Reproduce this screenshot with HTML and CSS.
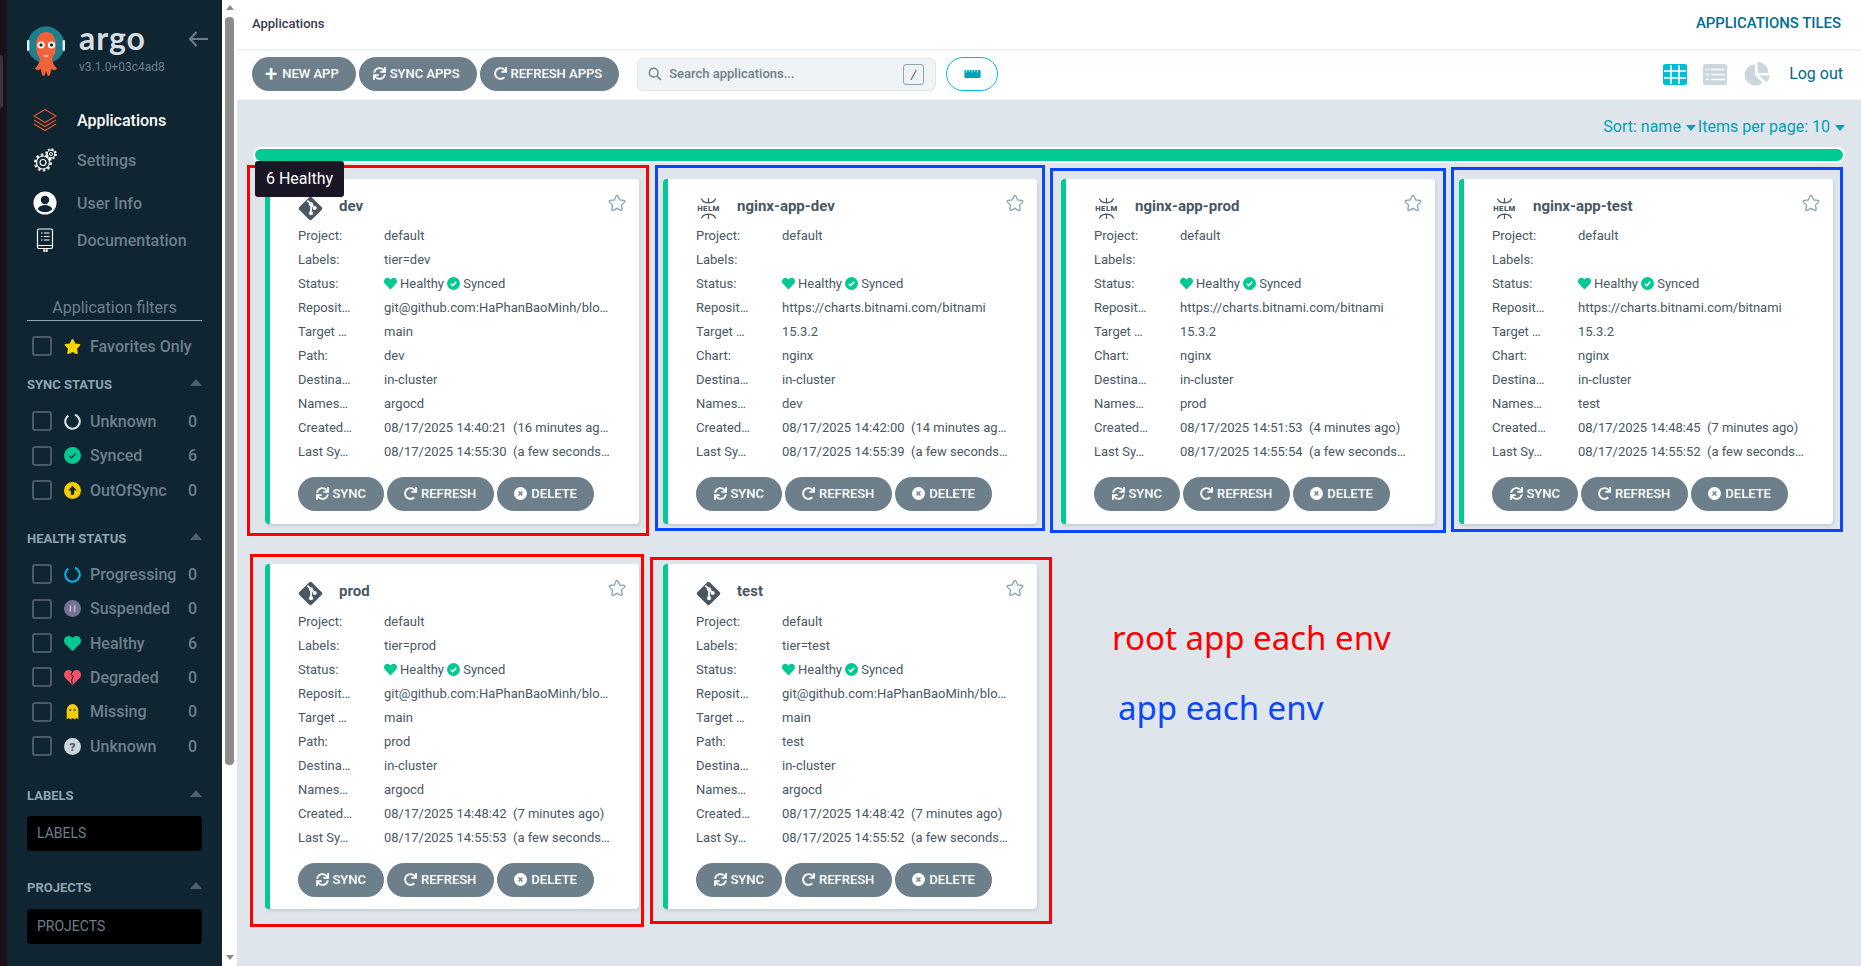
FILE: index.html
```html
<!DOCTYPE html>
<html lang="en">
<head>
    <meta charset="UTF-8">
    <title>Applications Tiles - Argo CD</title>
    <link rel="stylesheet" href="styles.css">
</head>
<body>
    <svg class="sprite" xmlns="http://www.w3.org/2000/svg">
        <symbol id="i-sync" viewBox="0 0 512 512"><path fill="currentColor" d="M440.65 12.57l4 82.77A247.16 247.16 0 0 0 255.83 8C134.73 8 33.91 94.92 12.29 209.82A12 12 0 0 0 24.09 224h49.05a12 12 0 0 0 11.67-9.26 175.91 175.91 0 0 1 317-56.94l-101.46-4.86a12 12 0 0 0-12.57 12v47.41a12 12 0 0 0 12 12H500a12 12 0 0 0 12-12V12a12 12 0 0 0-12-12h-47.37a12 12 0 0 0-11.98 12.57zM255.83 432a175.61 175.61 0 0 1-146-77.8l101.8 4.87a12 12 0 0 0 12.57-12v-47.4a12 12 0 0 0-12-12H12a12 12 0 0 0-12 12V500a12 12 0 0 0 12 12h47.35a12 12 0 0 0 12-12.6l-4.15-82.57A247.17 247.17 0 0 0 255.83 504c121.11 0 221.93-86.92 243.55-201.82a12 12 0 0 0-11.8-14.18h-49.05a12 12 0 0 0-11.67 9.26A175.86 175.86 0 0 1 255.83 432z"/></symbol>
        <symbol id="i-redo" viewBox="0 0 512 512"><path fill="currentColor" d="M500.33 0h-47.41a12 12 0 0 0-12 12.57l4 82.76A247.42 247.42 0 0 0 256 8C119.34 8 8.05 119.53 8 256.19 8 393 119.1 504 256 504a247.1 247.1 0 0 0 166.18-63.91 12 12 0 0 0 .48-17.43l-34-34a12 12 0 0 0-16.38-.55A176 176 0 1 1 402.1 157.8l-101.53-4.87a12 12 0 0 0-12.57 12v47.41a12 12 0 0 0 12 12h200.33a12 12 0 0 0 12-12V12a12 12 0 0 0-12-12z"/></symbol>
        <symbol id="i-delete" viewBox="0 0 16 16"><circle cx="8" cy="8" r="8" fill="currentColor"/><path d="M5.6 5.6l4.8 4.8M10.4 5.6l-4.8 4.8" stroke="#6d7f8b" stroke-width="1.6"/></symbol>
        <symbol id="i-heart" viewBox="0 0 512 512"><path fill="#00c994" d="M462.3 62.6C407.5 15.9 326 24.3 275.7 76.2L256 96.5l-19.7-20.3C186.1 24.3 104.5 15.9 49.7 62.6c-62.8 53.6-66.1 149.8-9.9 207.9l193.5 199.8c12.5 12.9 32.8 12.9 45.3 0l193.5-199.8c56.3-58.1 53-154.3-9.8-207.9z"/></symbol>
        <symbol id="i-check" viewBox="0 0 16 16"><circle cx="8" cy="8" r="8" fill="#00c994"/><path d="M4.6 8.2l2.4 2.4 4.4-4.6" fill="none" stroke="#fff" stroke-width="1.8"/></symbol>
        <symbol id="i-star" viewBox="-20 -20 616 552"><path fill="none" stroke="#8fa4b1" stroke-width="46" d="M259.3 17.8L194 150.2 47.9 171.5c-26.2 3.8-36.7 36.1-17.7 54.6l105.7 103-25 145.5c-4.5 26.3 23.2 46 46.4 33.7L288 439.6l130.7 68.7c23.2 12.2 50.9-7.4 46.4-33.7l-25-145.5 105.7-103c19-18.5 8.5-50.8-17.7-54.6L382 150.2 316.7 17.8c-11.7-23.6-45.6-23.9-57.4 0z"/></symbol>
        <symbol id="i-git" viewBox="0 0 24 24"><rect x="3.5" y="3.5" width="17" height="17" rx="2" transform="rotate(45 12 12)" fill="#495763"/><path d="M9 4.5l7 7M12.5 8v8.5" stroke="#fff" stroke-width="1.7" fill="none"/><circle cx="12.5" cy="8" r="2" fill="#fff"/><circle cx="16" cy="11.5" r="2" fill="#fff"/><circle cx="12.5" cy="16.5" r="2" fill="#fff"/></symbol>
        <symbol id="i-helm" viewBox="0 0 24 24">
            <g fill="none" stroke="#495763" stroke-width="1.2"><path d="M6 4.5Q12 8.5 18 4.5M12 6.5V2M7.8 5.8L5 2.5M16.2 5.8L19 2.5"/><path d="M6 19.5Q12 15.5 18 19.5M12 17.5V22M7.8 18.2L5 21.5M16.2 18.2L19 21.5"/></g>
            <text x="12" y="14.7" text-anchor="middle" font-family="Roboto" font-weight="900" font-size="7.4" letter-spacing=".5" fill="#495763">HELM</text>
        </symbol>
    </svg>

    <div class="strip"><div class="strip-tab"></div></div>

    <aside class="sidebar">
        <div class="brand">
            <svg class="brand-logo" viewBox="0 0 38 52">
                <circle cx="19" cy="20" r="18.5" fill="#1c7f8d"/>
                <rect x="0" y="15" width="2.4" height="11" rx="1" fill="#e8eef0"/>
                <rect x="35.6" y="15" width="2.4" height="11" rx="1" fill="#e8eef0"/>
                <path d="M9 21C9 12 13 7 19 7s10 5 10 14c0 6-2 10-4 13 1 5 3 8 5 9-1 3-4 2-6 1 0 3-1 6-2 7-2 0-2-2-3-5-1 3-1 5-3 5-1-1-2-4-2-7-2 1-5 2-6-1 2-1 4-4 5-9-2-3-4-7-4-13z" fill="#f0623a"/>
                <circle cx="14" cy="20" r="3.6" fill="#fff"/><circle cx="24.5" cy="20" r="3.6" fill="#fff"/>
                <circle cx="14" cy="20" r="1.7" fill="#2b2b2b"/><circle cx="24.5" cy="20" r="1.7" fill="#2b2b2b"/>
                <path d="M16 30.5q3 2.5 6 0z" fill="#fff"/>
            </svg>
            <div class="brand-text">
                <div class="brand-name">argo</div>
                <div class="brand-version">v3.1.0+03c4ad8</div>
            </div>
            <svg class="brand-back" viewBox="0 0 20 16"><path d="M8.5 1L2 8l6.5 7M2.5 8H20" fill="none" stroke="#6d7f8b" stroke-width="2"/></svg>
        </div>

        <nav class="nav">
            <a class="nav-item nav-item-active">
                <svg class="nav-icon" viewBox="0 0 24 24" fill="none" stroke="#e9562e" stroke-width="1.1"><path d="M12 1.5L23 8l-11 6.5L1 8z"/><path d="M1 12l11 6.5L23 12"/><path d="M1 16l11 6.5L23 16"/></svg>
                Applications
            </a>
            <a class="nav-item">
                <svg class="nav-icon" viewBox="0 0 24 24" fill="none" stroke="#fff"><circle cx="10" cy="14.5" r="6.5" stroke-width="1.2"/><circle cx="10" cy="14.5" r="8" stroke-width="2" stroke-dasharray="2.6 2.43"/><circle cx="10" cy="14.5" r="3" stroke-width="1.2"/><circle cx="18" cy="6" r="3.8" stroke-width="1.2"/><circle cx="18" cy="6" r="5" stroke-width="1.6" stroke-dasharray="2 1.93"/><circle cx="18" cy="6" r="1.5" stroke-width="1"/></svg>
                Settings
            </a>
            <a class="nav-item">
                <svg class="nav-icon" viewBox="0 0 24 24"><circle cx="12" cy="12" r="11.5" fill="#fff"/><circle cx="12" cy="9" r="4.2" fill="#0f2531"/><path d="M4.6 18c1.6-3 4.4-4 7.4-4s5.8 1 7.4 4c-2 2.2-4.6 3.3-7.4 3.3S6.6 20.2 4.6 18z" fill="#0f2531"/></svg>
                User Info
            </a>
            <a class="nav-item">
                <svg class="nav-icon" viewBox="0 0 24 24" fill="none" stroke="#fff" stroke-width="1.2"><rect x="4.5" y="1" width="15" height="19.5" rx="1.5"/><path d="M4.5 17.5h15M11 20.5v3l1.5-1 1.5 1v-3M8 5h1.5M11 5h5.5M8 8.5h1.5M11 8.5h5.5M8 12h1.5M11 12h5.5"/></svg>
                Documentation
            </a>
        </nav>

        <div class="filters-title">Application filters</div>
        <div class="filter-row filter-row-fav">
            <span class="check"></span>
            <svg class="filter-icon" viewBox="0 0 576 512"><path fill="#ffd500" d="M259.3 17.8L194 150.2 47.9 171.5c-26.2 3.8-36.7 36.1-17.7 54.6l105.7 103-25 145.5c-4.5 26.3 23.2 46 46.4 33.7L288 439.6l130.7 68.7c23.2 12.2 50.9-7.4 46.4-33.7l-25-145.5 105.7-103c19-18.5 8.5-50.8-17.7-54.6L382 150.2 316.7 17.8c-11.7-23.6-45.6-23.9-57.4 0z"/></svg>
            <span class="filter-label">Favorites Only</span>
        </div>

        <div class="section-head section-sync">SYNC STATUS <span class="caret-up"></span></div>
        <div class="filter-row">
            <span class="check"></span>
            <svg class="filter-icon" viewBox="0 0 16 16"><circle cx="8" cy="8" r="6.8" fill="none" stroke="#d5dfe6" stroke-width="2" stroke-dasharray="36 7" transform="rotate(-70 8 8)"/></svg>
            <span class="filter-label">Unknown</span><span class="filter-count">0</span>
        </div>
        <div class="filter-row">
            <span class="check"></span>
            <svg class="filter-icon" viewBox="0 0 16 16"><circle cx="8" cy="8" r="8" fill="#00c994"/><path d="M5 8.2l2 2 4-4" fill="none" stroke="#123" stroke-width="1.2"/></svg>
            <span class="filter-label">Synced</span><span class="filter-count">6</span>
        </div>
        <div class="filter-row">
            <span class="check"></span>
            <svg class="filter-icon" viewBox="0 0 16 16"><circle cx="8" cy="8" r="8" fill="#f5cd00"/><path d="M8 3.5L12 8H9.5v4h-3V8H4z" fill="#0f2531"/></svg>
            <span class="filter-label">OutOfSync</span><span class="filter-count">0</span>
        </div>

        <div class="section-head section-health">HEALTH STATUS <span class="caret-up"></span></div>
        <div class="filter-row">
            <span class="check"></span>
            <svg class="filter-icon" viewBox="0 0 16 16"><circle cx="8" cy="8" r="6.8" fill="none" stroke="#0dadea" stroke-width="2" stroke-dasharray="36 7" transform="rotate(-70 8 8)"/></svg>
            <span class="filter-label">Progressing</span><span class="filter-count">0</span>
        </div>
        <div class="filter-row">
            <span class="check"></span>
            <svg class="filter-icon" viewBox="0 0 16 16"><circle cx="8" cy="8" r="8" fill="#766f94"/><path d="M6 5v6M10 5v6" stroke="#b5b0c8" stroke-width="1.8"/></svg>
            <span class="filter-label">Suspended</span><span class="filter-count">0</span>
        </div>
        <div class="filter-row">
            <span class="check"></span>
            <svg class="filter-icon"><use href="#i-heart"/></svg>
            <span class="filter-label">Healthy</span><span class="filter-count">6</span>
        </div>
        <div class="filter-row">
            <span class="check"></span>
            <svg class="filter-icon" viewBox="0 0 512 512"><path fill="#f0526a" d="M462.3 62.6C407.5 15.9 326 24.3 275.7 76.2L256 96.5l-19.7-20.3C186.1 24.3 104.5 15.9 49.7 62.6c-62.8 53.6-66.1 149.8-9.9 207.9l193.5 199.8c12.5 12.9 32.8 12.9 45.3 0l193.5-199.8c56.3-58.1 53-154.3-9.8-207.9z"/><path d="M270 60l-60 110 70 50-50 120 20 110" fill="none" stroke="#0f2531" stroke-width="30"/></svg>
            <span class="filter-label">Degraded</span><span class="filter-count">0</span>
        </div>
        <div class="filter-row">
            <span class="check"></span>
            <svg class="filter-icon" viewBox="0 0 16 16"><path d="M2.5 15.5V7a5.5 6 0 0 1 11 0v8.5l-1.8-1.3-1.9 1.3L8 14.2l-1.8 1.3-1.9-1.3z" fill="#f5cd00"/><circle cx="6" cy="6.5" r=".9" fill="#0f2531"/><circle cx="10" cy="6.5" r=".9" fill="#0f2531"/></svg>
            <span class="filter-label">Missing</span><span class="filter-count">0</span>
        </div>
        <div class="filter-row">
            <span class="check"></span>
            <svg class="filter-icon" viewBox="0 0 16 16"><circle cx="8" cy="8" r="8" fill="#ccd6dd"/><text x="8" y="11.8" text-anchor="middle" font-family="Roboto" font-weight="900" font-size="11" fill="#495763">?</text></svg>
            <span class="filter-label">Unknown</span><span class="filter-count">0</span>
        </div>

        <div class="section-head section-labels">LABELS <span class="caret-up"></span></div>
        <div class="tag-input">LABELS</div>
        <div class="section-head section-projects">PROJECTS <span class="caret-up"></span></div>
        <div class="tag-input">PROJECTS</div>
    </aside>

    <div class="rail">
        <span class="rail-arrow-up"></span>
        <div class="rail-thumb"></div>
        <span class="rail-arrow-down"></span>
    </div>

    <main class="main">
        <header class="topbar">
            <div class="crumb">Applications</div>
            <div class="page-title">APPLICATIONS TILES</div>
        </header>

        <div class="toolbar">
            <button class="btn btn-tool"><span class="btn-plus">+</span> NEW APP</button>
            <button class="btn btn-tool"><svg class="btn-icon"><use href="#i-sync"/></svg> SYNC APPS</button>
            <button class="btn btn-tool"><svg class="btn-icon"><use href="#i-redo"/></svg> REFRESH APPS</button>
            <div class="search">
                <svg class="search-icon" viewBox="0 0 16 16"><circle cx="6.5" cy="6.5" r="5" fill="none" stroke="#6d7f8b" stroke-width="1.6"/><path d="M10.3 10.3l4.5 4.5" stroke="#6d7f8b" stroke-width="1.8"/></svg>
                <input class="search-input" type="text" placeholder="Search applications...">
                <span class="search-key">/</span>
            </div>
            <button class="btn-outline">
                <svg class="ruler-icon" viewBox="0 0 18 10"><rect y="1" width="18" height="9" rx="1" fill="#00a2b3"/><path d="M2.5 1v3M5.5 1v2M8.5 1v3M11.5 1v2M14.5 1v3" stroke="#fff" stroke-width=".9"/></svg>
            </button>
            <div class="toolbar-right">
                <svg class="view-icon" viewBox="0 0 24 21"><rect width="24" height="21" rx="2.5" fill="#00bcd4"/><path d="M1 7h22M1 14h22M8 1v19M16 1v19" stroke="#fff" stroke-width="1.7"/></svg>
                <svg class="view-icon" viewBox="0 0 24 21"><rect width="24" height="21" rx="2.5" fill="#ccd6dd"/><path d="M8 5.5h14M8 10.5h14M8 15.5h14M2.5 5.5H6M2.5 10.5H6M2.5 15.5H6" stroke="#fff" stroke-width="1.7"/></svg>
                <svg class="view-icon view-icon-pie" viewBox="0 0 26 24"><path d="M11 2.5a10.5 10.5 0 1 0 7.5 18L11 13z" fill="#ccd6dd"/><path d="M13.5 0a11 11 0 0 1 11 11h-11z" fill="#ccd6dd"/><path d="M15 13.5h11a11 11 0 0 1-3.3 6.7z" fill="#ccd6dd"/></svg>
                <a class="logout">Log out</a>
            </div>
        </div>

        <section class="content">
            <div class="sort-row">
                <span>Sort: name <i class="caret-down"></i></span>
                <span>Items per page: 10 <i class="caret-down"></i></span>
            </div>
            <div class="health-bar"></div>

            <div class="tiles">
                <article class="tile">
                    <div class="tile-head">
                        <svg class="tile-logo"><use href="#i-git"/></svg>
                        <span class="tile-name">dev</span>
                        <svg class="tile-star"><use href="#i-star"/></svg>
                    </div>
                    <div class="tile-row"><span class="key">Project:</span><span class="val">default</span></div>
                    <div class="tile-row"><span class="key">Labels:</span><span class="val">tier=dev</span></div>
                    <div class="tile-row"><span class="key">Status:</span><span class="val"><svg class="status-icon"><use href="#i-heart"/></svg>Healthy <svg class="status-icon"><use href="#i-check"/></svg>Synced</span></div>
                    <div class="tile-row"><span class="key">Reposit…</span><span class="val">git@github.com:HaPhanBaoMinh/blo…</span></div>
                    <div class="tile-row"><span class="key">Target …</span><span class="val">main</span></div>
                    <div class="tile-row"><span class="key">Path:</span><span class="val">dev</span></div>
                    <div class="tile-row"><span class="key">Destina…</span><span class="val">in-cluster</span></div>
                    <div class="tile-row"><span class="key">Names…</span><span class="val">argocd</span></div>
                    <div class="tile-row"><span class="key">Created…</span><span class="val">08/17/2025 14:40:21 &nbsp;(16 minutes ag…</span></div>
                    <div class="tile-row"><span class="key">Last Sy…</span><span class="val">08/17/2025 14:55:30 &nbsp;(a few seconds…</span></div>
                    <div class="tile-actions">
                        <button class="btn"><svg class="btn-icon"><use href="#i-sync"/></svg> SYNC</button>
                        <button class="btn"><svg class="btn-icon"><use href="#i-redo"/></svg> REFRESH</button>
                        <button class="btn"><svg class="btn-icon"><use href="#i-delete"/></svg> DELETE</button>
                    </div>
                </article>

                <article class="tile">
                    <div class="tile-head">
                        <svg class="tile-logo"><use href="#i-helm"/></svg>
                        <span class="tile-name">nginx-app-dev</span>
                        <svg class="tile-star"><use href="#i-star"/></svg>
                    </div>
                    <div class="tile-row"><span class="key">Project:</span><span class="val">default</span></div>
                    <div class="tile-row"><span class="key">Labels:</span><span class="val"></span></div>
                    <div class="tile-row"><span class="key">Status:</span><span class="val"><svg class="status-icon"><use href="#i-heart"/></svg>Healthy <svg class="status-icon"><use href="#i-check"/></svg>Synced</span></div>
                    <div class="tile-row"><span class="key">Reposit…</span><span class="val">https://charts.bitnami.com/bitnami</span></div>
                    <div class="tile-row"><span class="key">Target …</span><span class="val">15.3.2</span></div>
                    <div class="tile-row"><span class="key">Chart:</span><span class="val">nginx</span></div>
                    <div class="tile-row"><span class="key">Destina…</span><span class="val">in-cluster</span></div>
                    <div class="tile-row"><span class="key">Names…</span><span class="val">dev</span></div>
                    <div class="tile-row"><span class="key">Created…</span><span class="val">08/17/2025 14:42:00 &nbsp;(14 minutes ag…</span></div>
                    <div class="tile-row"><span class="key">Last Sy…</span><span class="val">08/17/2025 14:55:39 &nbsp;(a few seconds…</span></div>
                    <div class="tile-actions">
                        <button class="btn"><svg class="btn-icon"><use href="#i-sync"/></svg> SYNC</button>
                        <button class="btn"><svg class="btn-icon"><use href="#i-redo"/></svg> REFRESH</button>
                        <button class="btn"><svg class="btn-icon"><use href="#i-delete"/></svg> DELETE</button>
                    </div>
                </article>

                <article class="tile">
                    <div class="tile-head">
                        <svg class="tile-logo"><use href="#i-helm"/></svg>
                        <span class="tile-name">nginx-app-prod</span>
                        <svg class="tile-star"><use href="#i-star"/></svg>
                    </div>
                    <div class="tile-row"><span class="key">Project:</span><span class="val">default</span></div>
                    <div class="tile-row"><span class="key">Labels:</span><span class="val"></span></div>
                    <div class="tile-row"><span class="key">Status:</span><span class="val"><svg class="status-icon"><use href="#i-heart"/></svg>Healthy <svg class="status-icon"><use href="#i-check"/></svg>Synced</span></div>
                    <div class="tile-row"><span class="key">Reposit…</span><span class="val">https://charts.bitnami.com/bitnami</span></div>
                    <div class="tile-row"><span class="key">Target …</span><span class="val">15.3.2</span></div>
                    <div class="tile-row"><span class="key">Chart:</span><span class="val">nginx</span></div>
                    <div class="tile-row"><span class="key">Destina…</span><span class="val">in-cluster</span></div>
                    <div class="tile-row"><span class="key">Names…</span><span class="val">prod</span></div>
                    <div class="tile-row"><span class="key">Created…</span><span class="val">08/17/2025 14:51:53 &nbsp;(4 minutes ago)</span></div>
                    <div class="tile-row"><span class="key">Last Sy…</span><span class="val">08/17/2025 14:55:54 &nbsp;(a few seconds…</span></div>
                    <div class="tile-actions">
                        <button class="btn"><svg class="btn-icon"><use href="#i-sync"/></svg> SYNC</button>
                        <button class="btn"><svg class="btn-icon"><use href="#i-redo"/></svg> REFRESH</button>
                        <button class="btn"><svg class="btn-icon"><use href="#i-delete"/></svg> DELETE</button>
                    </div>
                </article>

                <article class="tile">
                    <div class="tile-head">
                        <svg class="tile-logo"><use href="#i-helm"/></svg>
                        <span class="tile-name">nginx-app-test</span>
                        <svg class="tile-star"><use href="#i-star"/></svg>
                    </div>
                    <div class="tile-row"><span class="key">Project:</span><span class="val">default</span></div>
                    <div class="tile-row"><span class="key">Labels:</span><span class="val"></span></div>
                    <div class="tile-row"><span class="key">Status:</span><span class="val"><svg class="status-icon"><use href="#i-heart"/></svg>Healthy <svg class="status-icon"><use href="#i-check"/></svg>Synced</span></div>
                    <div class="tile-row"><span class="key">Reposit…</span><span class="val">https://charts.bitnami.com/bitnami</span></div>
                    <div class="tile-row"><span class="key">Target …</span><span class="val">15.3.2</span></div>
                    <div class="tile-row"><span class="key">Chart:</span><span class="val">nginx</span></div>
                    <div class="tile-row"><span class="key">Destina…</span><span class="val">in-cluster</span></div>
                    <div class="tile-row"><span class="key">Names…</span><span class="val">test</span></div>
                    <div class="tile-row"><span class="key">Created…</span><span class="val">08/17/2025 14:48:45 &nbsp;(7 minutes ago)</span></div>
                    <div class="tile-row"><span class="key">Last Sy…</span><span class="val">08/17/2025 14:55:52 &nbsp;(a few seconds…</span></div>
                    <div class="tile-actions">
                        <button class="btn"><svg class="btn-icon"><use href="#i-sync"/></svg> SYNC</button>
                        <button class="btn"><svg class="btn-icon"><use href="#i-redo"/></svg> REFRESH</button>
                        <button class="btn"><svg class="btn-icon"><use href="#i-delete"/></svg> DELETE</button>
                    </div>
                </article>

                <article class="tile">
                    <div class="tile-head">
                        <svg class="tile-logo"><use href="#i-git"/></svg>
                        <span class="tile-name">prod</span>
                        <svg class="tile-star"><use href="#i-star"/></svg>
                    </div>
                    <div class="tile-row"><span class="key">Project:</span><span class="val">default</span></div>
                    <div class="tile-row"><span class="key">Labels:</span><span class="val">tier=prod</span></div>
                    <div class="tile-row"><span class="key">Status:</span><span class="val"><svg class="status-icon"><use href="#i-heart"/></svg>Healthy <svg class="status-icon"><use href="#i-check"/></svg>Synced</span></div>
                    <div class="tile-row"><span class="key">Reposit…</span><span class="val">git@github.com:HaPhanBaoMinh/blo…</span></div>
                    <div class="tile-row"><span class="key">Target …</span><span class="val">main</span></div>
                    <div class="tile-row"><span class="key">Path:</span><span class="val">prod</span></div>
                    <div class="tile-row"><span class="key">Destina…</span><span class="val">in-cluster</span></div>
                    <div class="tile-row"><span class="key">Names…</span><span class="val">argocd</span></div>
                    <div class="tile-row"><span class="key">Created…</span><span class="val">08/17/2025 14:48:42 &nbsp;(7 minutes ago)</span></div>
                    <div class="tile-row"><span class="key">Last Sy…</span><span class="val">08/17/2025 14:55:53 &nbsp;(a few seconds…</span></div>
                    <div class="tile-actions">
                        <button class="btn"><svg class="btn-icon"><use href="#i-sync"/></svg> SYNC</button>
                        <button class="btn"><svg class="btn-icon"><use href="#i-redo"/></svg> REFRESH</button>
                        <button class="btn"><svg class="btn-icon"><use href="#i-delete"/></svg> DELETE</button>
                    </div>
                </article>

                <article class="tile">
                    <div class="tile-head">
                        <svg class="tile-logo"><use href="#i-git"/></svg>
                        <span class="tile-name">test</span>
                        <svg class="tile-star"><use href="#i-star"/></svg>
                    </div>
                    <div class="tile-row"><span class="key">Project:</span><span class="val">default</span></div>
                    <div class="tile-row"><span class="key">Labels:</span><span class="val">tier=test</span></div>
                    <div class="tile-row"><span class="key">Status:</span><span class="val"><svg class="status-icon"><use href="#i-heart"/></svg>Healthy <svg class="status-icon"><use href="#i-check"/></svg>Synced</span></div>
                    <div class="tile-row"><span class="key">Reposit…</span><span class="val">git@github.com:HaPhanBaoMinh/blo…</span></div>
                    <div class="tile-row"><span class="key">Target …</span><span class="val">main</span></div>
                    <div class="tile-row"><span class="key">Path:</span><span class="val">test</span></div>
                    <div class="tile-row"><span class="key">Destina…</span><span class="val">in-cluster</span></div>
                    <div class="tile-row"><span class="key">Names…</span><span class="val">argocd</span></div>
                    <div class="tile-row"><span class="key">Created…</span><span class="val">08/17/2025 14:48:42 &nbsp;(7 minutes ago)</span></div>
                    <div class="tile-row"><span class="key">Last Sy…</span><span class="val">08/17/2025 14:55:52 &nbsp;(a few seconds…</span></div>
                    <div class="tile-actions">
                        <button class="btn"><svg class="btn-icon"><use href="#i-sync"/></svg> SYNC</button>
                        <button class="btn"><svg class="btn-icon"><use href="#i-redo"/></svg> REFRESH</button>
                        <button class="btn"><svg class="btn-icon"><use href="#i-delete"/></svg> DELETE</button>
                    </div>
                </article>
            </div>
        </section>
    </main>

    <!-- markup drawn over the screenshot -->
    <div class="mark mark-red mark-dev"></div>
    <div class="mark mark-blue mark-nginx-dev"></div>
    <div class="mark mark-blue mark-nginx-prod"></div>
    <div class="mark mark-blue mark-nginx-test"></div>
    <div class="mark mark-red mark-prod"></div>
    <div class="mark mark-red mark-test"></div>
    <div class="note note-red">root app each env</div>
    <div class="note note-blue">app each env</div>
    <div class="tooltip">6 Healthy</div>
</body>
</html>
```

FILE: styles.css
```css
* {
    box-sizing: border-box;
}

html,
body {
    height: 966px;
    margin: 0;
    overflow: hidden;
}

body {
    position: relative;
    display: flex;
    font-family: Roboto, "Liberation Sans", sans-serif;
    background-color: #fff;
}

.sprite {
    display: none;
}

.strip {
    width: 7px;
    background-color: #1d1118;
}

.strip-tab {
    width: 3px;
    height: 53px;
    margin-top: 55px;
    background-color: #3b3338;
    border-radius: 0 4px 4px 0;
}

/* sidebar */
.sidebar {
    width: 215px;
    padding: 0 20px;
    background-color: #0f2531;
    color: #6d7f8b;
}

.brand {
    display: flex;
    height: 100px;
    padding-top: 25px;
}

.brand-logo {
    width: 38px;
    height: 52px;
    flex-shrink: 0;
}

.brand-text {
    width: 109px;
    margin-left: 14px;
    flex-shrink: 0;
}

.brand-name {
    height: 35px;
    font-family: Lato, sans-serif;
    font-size: 32px;
    font-weight: 700;
    letter-spacing: 1px;
    line-height: 25px;
    color: #d7dce0;
}

.brand-version {
    font-size: 12px;
    line-height: 14px;
    color: #6d7f8b;
}

.brand-back {
    width: 20px;
    height: 16px;
    margin-top: 6px;
    flex-shrink: 0;
}

.nav {
    display: grid;
    grid-template-rows: 40px 40px 46px 28px;
}

.nav-item {
    display: flex;
    align-items: center;
    font-size: 16px;
    font-weight: 500;
    color: #6d7f8b;
}

.nav-item-active {
    color: #fff;
}

.nav-icon {
    width: 24px;
    height: 24px;
    margin: 0 20px 0 6px;
}

.filters-title {
    height: 24px;
    margin-top: 43px;
    border-bottom: 1px solid #8fa4b1;
    font-size: 16px;
    line-height: 22px;
    text-align: center;
}

.filter-row {
    display: flex;
    align-items: center;
    height: 34.33px;
    padding: 0 5px;
    font-size: 16px;
    font-weight: 500;
}

.filter-row-fav {
    margin-top: 8px;
}

.check {
    width: 20px;
    height: 20px;
    flex-shrink: 0;
    border: 2px solid #4a5a66;
    border-radius: 3px;
}

.filter-icon {
    width: 17px;
    height: 17px;
    flex-shrink: 0;
    margin: 0 9px 0 12px;
}

.filter-label {
    flex: 1;
    white-space: nowrap;
}

.filter-count {
    width: 9px;
}

.section-head {
    display: flex;
    justify-content: space-between;
    align-items: center;
    height: 20px;
    font-size: 13px;
    font-weight: 700;
    color: #8fa4b1;
}

.section-sync {
    margin: 11px 0 10px;
}

.section-health {
    margin: 21px 0 9px;
}

.section-labels {
    margin: 22px 0 11px;
}

.section-projects {
    margin: 26px 0 12px;
}

.caret-up {
    width: 0;
    height: 0;
    border-left: 6.5px solid transparent;
    border-right: 6.5px solid transparent;
    border-bottom: 7px solid #4e6070;
    margin-bottom: 3px;
}

.tag-input {
    height: 35px;
    padding-left: 10px;
    background-color: #000;
    border-radius: 4px;
    font-size: 14px;
    line-height: 34px;
    color: #6d7f8b;
}

/* fake scrollbar */
.rail {
    display: flex;
    flex-direction: column;
    align-items: center;
    width: 15px;
    height: 966px;
    padding: 5px 0 6px;
    background-color: #fff;
}

.rail-thumb {
    width: 9px;
    height: 748px;
    margin: 7px 0 auto;
    background-color: #8c8c8c;
    border-radius: 4px;
}

.rail-arrow-up,
.rail-arrow-down {
    width: 0;
    height: 0;
    border-left: 4.5px solid transparent;
    border-right: 4.5px solid transparent;
}

.rail-arrow-up {
    border-bottom: 5px solid #8c8c8c;
}

.rail-arrow-down {
    border-top: 5px solid #8c8c8c;
}

/* main area */
.main {
    flex: 1;
    min-width: 0;
    background-color: #dee6eb;
}

.topbar {
    display: flex;
    justify-content: space-between;
    align-items: center;
    height: 51px;
    padding: 0 20px 3px 15px;
    background-color: #fff;
    border-bottom: 2px solid #eff3f5;
}

.crumb {
    font-size: 13px;
    font-weight: 500;
    color: #363c4a;
}

.page-title {
    font-size: 14.9px;
    font-weight: 500;
    color: #006d8f;
}

.toolbar {
    display: flex;
    align-items: center;
    height: 49px;
    padding: 0 18px 2px 15px;
    background-color: #fff;
    border-bottom: 1px solid #eff3f5;
}

.btn {
    display: inline-flex;
    align-items: center;
    justify-content: center;
    gap: 4px;
    height: 34px;
    padding: 0 17.5px 1px;
    border: none;
    border-radius: 17px;
    background-color: #6d7f8b;
    color: #fff;
    font-family: inherit;
    font-size: 13px;
    font-weight: 500;
    white-space: nowrap;
}

.btn-tool {
    margin-right: 3px;
    padding: 0 17px 1px 14px;
}

.btn-plus {
    margin: 0 1px 0 -1px;
    font-size: 22px;
    line-height: 1;
}

.btn-icon {
    width: 13px;
    height: 13px;
    flex-shrink: 0;
    color: #fff;
}

.search {
    display: flex;
    align-items: center;
    width: 299px;
    height: 33px;
    margin-left: 15px;
    padding: 0 11px 0 10px;
    background-color: #eff3f5;
    border: 1px solid #dee6eb;
    border-radius: 6px;
}

.search-icon {
    width: 14px;
    height: 14px;
    flex-shrink: 0;
}

.search-input {
    flex: 1;
    min-width: 0;
    height: 100%;
    margin-left: 7px;
    padding: 0 0 2px;
    border: none;
    outline: none;
    background: transparent;
    font-family: inherit;
    font-size: 13px;
    font-weight: 500;
    color: #6d7f8b;
}

.search-input::placeholder {
    color: #6d7f8b;
    opacity: 1;
}

.search-key {
    width: 21px;
    height: 21px;
    border: 1px solid #8fa4b1;
    border-radius: 3px;
    font-size: 13px;
    font-style: italic;
    line-height: 19px;
    text-align: center;
    color: #495763;
}

.btn-outline {
    width: 52px;
    height: 34px;
    margin-left: 10px;
    padding: 0;
    background-color: #fff;
    border: 1px solid #00bcd4;
    border-radius: 17px;
}

.ruler-icon {
    display: block;
    width: 17px;
    height: 9px;
    margin: 0 auto 2px;
}

.toolbar-right {
    display: flex;
    align-items: center;
    margin-left: auto;
}

.view-icon {
    width: 24px;
    height: 21px;
    margin-right: 16px;
}

.view-icon-pie {
    width: 26px;
    height: 24px;
    margin: 0 19px 0 1px;
}

.logout {
    margin-bottom: 2px;
    font-size: 16px;
    color: #00688e;
}

.content {
    padding: 0 16px;
}

.sort-row {
    display: flex;
    justify-content: flex-end;
    gap: 2px;
    height: 47px;
    padding-top: 17px;
    font-size: 16px;
    line-height: 19px;
    color: #00a2b3;
}

.caret-down {
    display: inline-block;
    width: 0;
    height: 0;
    margin-left: 1px;
    vertical-align: middle;
    border-left: 5.5px solid transparent;
    border-right: 5.5px solid transparent;
    border-top: 6px solid #00a2b3;
}

.health-bar {
    height: 16px;
    background-color: #00c994;
    border: 2px solid #fff;
    border-radius: 8px;
}

.tiles {
    display: grid;
    grid-template-columns: repeat(4, 374px);
    column-gap: 24px;
    row-gap: 40px;
    margin: 16px 0 0 12px;
}

.tile {
    height: 345px;
    padding: 16px 13px 0 28px;
    background-color: #fff;
    border-left: 5px solid #00c994;
    border-radius: 4px;
    box-shadow: 1px 2px 3px rgba(0, 0, 0, 0.1);
    color: #495763;
}

.tile-head {
    display: flex;
    align-items: center;
    height: 29px;
}

/* second row sits a pixel lower in the reference */
.tile:nth-child(n+5) .tile-head {
    margin-bottom: 1px;
}

.tile-logo {
    width: 25px;
    height: 25px;
    flex-shrink: 0;
    margin-bottom: 2px;
}

.tile-name {
    flex: 1;
    margin: 0 0 8px 16px;
    font-size: 15px;
    font-weight: 700;
}

.tile-star {
    width: 18px;
    height: 18px;
    margin-bottom: 14px;
}

.tile-row {
    display: flex;
    height: 24px;
    font-size: 13px;
    line-height: 24px;
}

.key {
    width: 86px;
    flex-shrink: 0;
    white-space: nowrap;
}

.val {
    white-space: nowrap;
}

.status-icon {
    width: 13px;
    height: 13px;
    margin-right: 3px;
    vertical-align: -2px;
}

.tile-actions {
    display: flex;
    gap: 3px;
    margin-top: 13px;
}

/* annotations on top of the page */
.mark {
    position: absolute;
    border: 3px solid;
    pointer-events: none;
}

.mark-red {
    border-color: #f00;
}

.mark-blue {
    border-color: #0a45ff;
}

.mark-dev {
    left: 247px;
    top: 165px;
    width: 402px;
    height: 371px;
}

.mark-nginx-dev {
    left: 655px;
    top: 165px;
    width: 390px;
    height: 366px;
}

.mark-nginx-prod {
    left: 1050px;
    top: 168px;
    width: 396px;
    height: 365px;
}

.mark-nginx-test {
    left: 1451px;
    top: 167px;
    width: 392px;
    height: 365px;
}

.mark-prod {
    left: 250px;
    top: 554px;
    width: 394px;
    height: 373px;
}

.mark-test {
    left: 650px;
    top: 557px;
    width: 402px;
    height: 367px;
}

.note {
    position: absolute;
    font-family: "Noto Sans", sans-serif;
    font-size: 33px;
    line-height: 44px;
    white-space: nowrap;
}

.note-red {
    left: 1112px;
    top: 616px;
    color: #f00;
}

.note-blue {
    left: 1118px;
    top: 686px;
    color: #0a45ff;
}

.tooltip {
    position: absolute;
    left: 255px;
    top: 161px;
    width: 89px;
    height: 36px;
    background-color: #1b1626;
    border-radius: 3px;
    font-size: 16px;
    line-height: 35px;
    text-align: center;
    color: #fff;
}
```
